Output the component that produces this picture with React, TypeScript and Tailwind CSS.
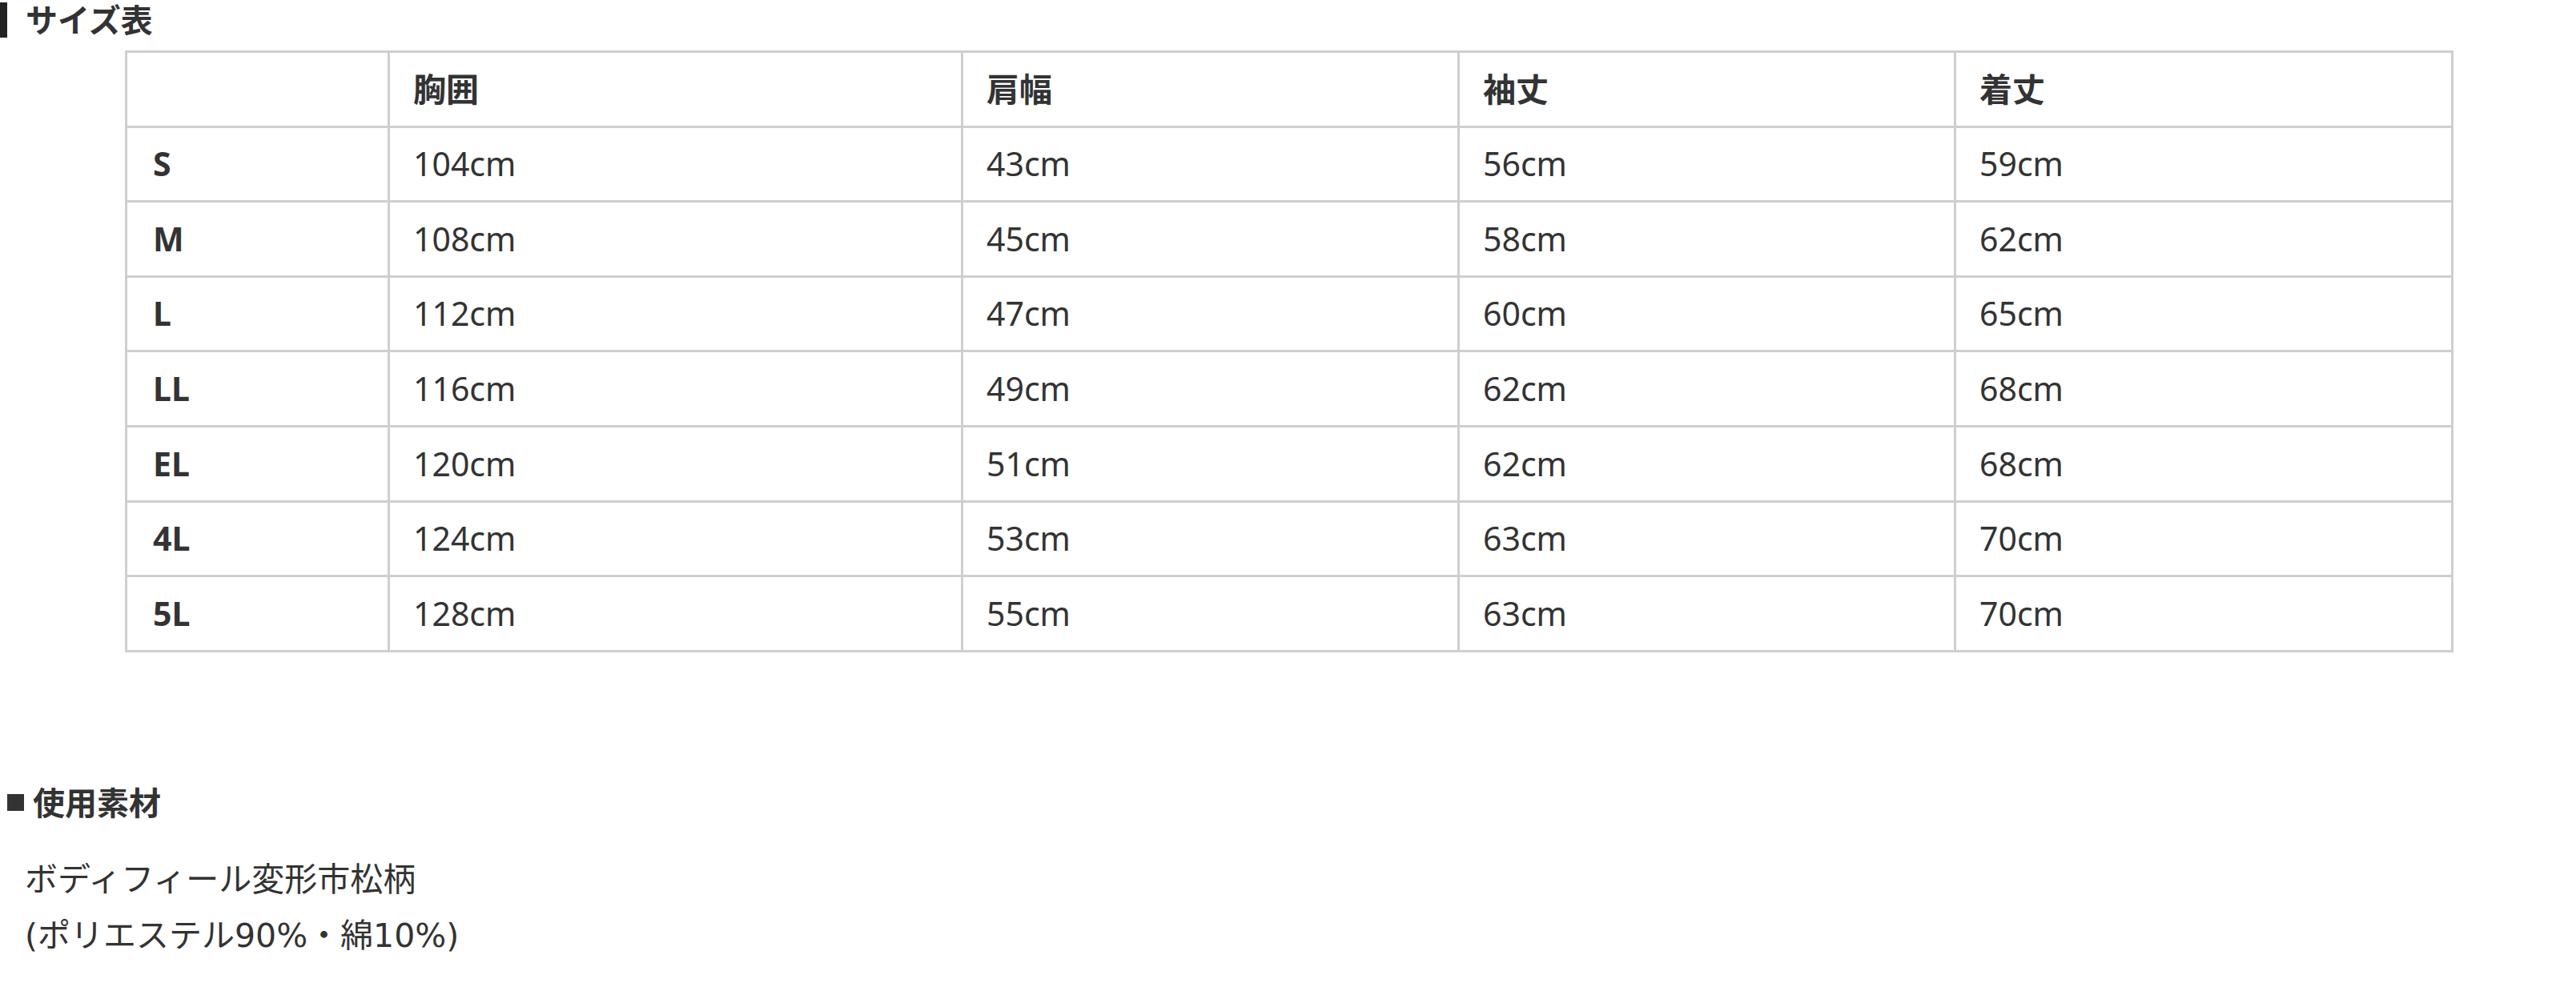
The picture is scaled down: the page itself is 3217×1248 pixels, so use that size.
import React from 'react';

const rows = [
  ['S', '104cm', '43cm', '56cm', '59cm'],
  ['M', '108cm', '45cm', '58cm', '62cm'],
  ['L', '112cm', '47cm', '60cm', '65cm'],
  ['LL', '116cm', '49cm', '62cm', '68cm'],
  ['EL', '120cm', '51cm', '62cm', '68cm'],
  ['4L', '124cm', '53cm', '63cm', '70cm'],
  ['5L', '128cm', '55cm', '63cm', '70cm'],
];

const headers = ['', '胸囲', '肩幅', '袖丈', '着丈'];

const App: React.FC = () => {
  return (
    <div
      className="w-[3217px] h-[1248px] bg-white text-[#333] overflow-hidden"
      style={{ fontFamily: '"Noto Sans", "Noto Sans CJK JP", sans-serif' }}
    >
      {/* Size chart heading */}
      <div className="flex items-center h-[50px]">
        <div className="w-[9px] h-[44px] bg-[#222]"></div>
        <h2 className="ml-[23px] text-[40px] font-bold leading-[48px]">サイズ表</h2>
      </div>

      <table className="ml-[156px] mt-[13px] w-[2905px] table-fixed border-collapse border-[3px] border-[#cfcfcf]">
        <colgroup>
          <col className="w-[328px]" />
          <col className="w-[716px]" />
          <col className="w-[620px]" />
          <col className="w-[620px]" />
          <col className="w-[621px]" />
        </colgroup>
        <thead>
          <tr>
            {headers.map((h, i) => (
              <th
                key={i}
                className="h-[93.6px] border-[3px] border-[#cfcfcf] pl-[29px] text-left align-middle text-[41px] font-bold"
              >
                {h}
              </th>
            ))}
          </tr>
        </thead>
        <tbody>
          {rows.map((r) => (
            <tr key={r[0]}>
              {r.map((c, i) => (
                <td
                  key={i}
                  className={`h-[93.6px] border-[3px] border-[#cfcfcf] align-middle text-[41px] ${
                    i === 0 ? 'font-bold pl-[32px]' : 'font-normal pl-[29px]'
                  }`}
                >
                  {c}
                </td>
              ))}
            </tr>
          ))}
        </tbody>
      </table>

      {/* Material */}
      <div className="mt-[168px] pl-[9px]">
        <h3 className="flex items-center text-[40px] font-bold leading-[40px]">
          <span className="inline-block w-[21px] h-[21px] bg-[#333] mr-[11px]"></span>
          使用素材
        </h3>
        <div className="mt-[38px] pl-[22px] text-[41px] leading-[72px]">
          <p>ボディフィール変形市松柄</p>
          <p style={{ fontFamily: '"DejaVu Sans", "Noto Sans CJK JP", sans-serif' }}>(ポリエステル90%・綿10%)</p>
        </div>
      </div>
    </div>
  );
};

export default App;
